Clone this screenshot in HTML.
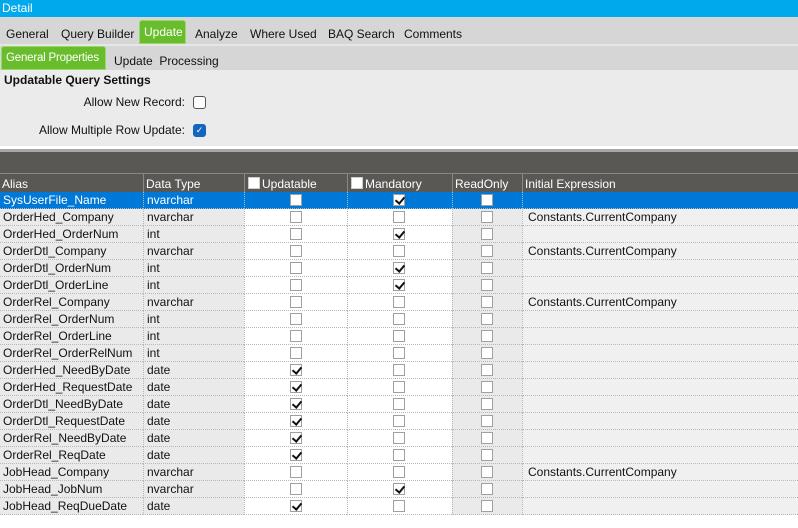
<!DOCTYPE html>
<html><head><meta charset="utf-8"><style>
*{margin:0;padding:0;box-sizing:border-box}
body{width:798px;height:528px;background:#fff;font-family:"Liberation Sans",Arial,sans-serif;font-size:12px;color:#111;position:relative;overflow:hidden}
.a{position:absolute}
.title{left:0;top:0;width:798px;height:17px;background:#00a9ec;color:#fff;padding:1px 2px;font-size:12px}
.tabs{left:0;top:17px;width:798px;height:27px;background:#d6d6d6}
.tab{position:absolute;top:10px}
.sub{left:0;top:44px;width:798px;height:26px;background:#d6d6d6;border-top:2px solid #e6e6e6}
.green{background:#69bd2c;color:#fff;border:1px solid #9ad86e;border-radius:3px 3px 0 0}
.panel{left:0;top:70px;width:798px;height:76px;background:#ebebeb}
.cb{position:absolute;width:13px;height:13px;border:1px solid #555;border-radius:3px;background:#fff}
.dark{left:0;top:149px;width:798px;height:43px;background:#5a5855;border-top:3px solid #a8a8a8}
.hdr{position:absolute;top:173px;height:19px;color:#fff;border-left:1px solid #8a8886;padding:3px 2px 0 2px;border-top:1px solid #8a8886}
.row{position:absolute;left:0;width:798px;height:17px}
.c{position:absolute;top:0;height:17px;border-bottom:1px dotted #b8b8b8;border-left:1px dotted #b8b8b8;padding:1px 0 0 3px;white-space:nowrap}
.k{position:absolute;top:2px;width:12px;height:12px;border:1px solid #a0a0a0;background:#fff}
.k.on::after{content:"";position:absolute;left:3px;top:0px;width:4px;height:7px;border-right:2px solid #111;border-bottom:2px solid #111;transform:rotate(40deg)}
.hk{position:absolute;top:3px;width:12px;height:12px;background:#fff;border:1px solid #ccc}
</style></head><body>
<div class="a title">Detail</div>
<div class="a tabs">
<span class="tab" style="left:6px">General</span>
<span class="tab" style="left:61px">Query Builder</span>
<div class="a green" style="left:139px;top:3px;width:47px;height:24px;padding:4px 0 0 4px">Update</div>
<span class="tab" style="left:195px">Analyze</span>
<span class="tab" style="left:250px">Where Used</span>
<span class="tab" style="left:328px">BAQ Search</span>
<span class="tab" style="left:404px">Comments</span>
</div>
<div class="a sub">
<div class="a green" style="left:1px;top:0px;width:105px;height:24px;padding:5px 0 0 4px;white-space:nowrap;font-size:11.5px;letter-spacing:-0.2px">General Properties</div>
<span class="a" style="left:114px;top:8px">Update&nbsp; Processing</span>
</div>
<div class="a panel">
<div class="a" style="left:4px;top:3px;font-weight:bold">Updatable Query Settings</div>
<div class="a" style="right:613px;top:25px">Allow New Record:</div>
<div class="cb" style="left:193px;top:26px"></div>
<div class="a" style="right:613px;top:53px">Allow Multiple Row Update:</div>
<div class="cb" style="left:193px;top:54px;background:#1565c0;border-color:#1565c0;color:#fff;font-size:9px;line-height:11px;text-align:center">✓</div>
</div>
<div class="a dark"></div>
<div class="hdr" style="left:0;width:143px;border-left:none">Alias</div>
<div class="hdr" style="left:143px;width:101px">Data Type</div>
<div class="hdr" style="left:244px;width:103px;padding-left:17px">Updatable<span class="hk" style="left:3px"></span></div>
<div class="hdr" style="left:347px;width:105px;padding-left:17px">Mandatory<span class="hk" style="left:3px"></span></div>
<div class="hdr" style="left:452px;width:70px">ReadOnly</div>
<div class="hdr" style="left:522px;width:276px">Initial Expression</div>
<div id="rows"></div>
<script>
var d=[["SysUserFile_Name","nvarchar",0,1,""],["OrderHed_Company","nvarchar",0,0,"C"],["OrderHed_OrderNum","int",0,1,""],["OrderDtl_Company","nvarchar",0,0,"C"],["OrderDtl_OrderNum","int",0,1,""],["OrderDtl_OrderLine","int",0,1,""],["OrderRel_Company","nvarchar",0,0,"C"],["OrderRel_OrderNum","int",0,0,""],["OrderRel_OrderLine","int",0,0,""],["OrderRel_OrderRelNum","int",0,0,""],["OrderHed_NeedByDate","date",1,0,""],["OrderHed_RequestDate","date",1,0,""],["OrderDtl_NeedByDate","date",1,0,""],["OrderDtl_RequestDate","date",1,0,""],["OrderRel_NeedByDate","date",1,0,""],["OrderRel_ReqDate","date",1,0,""],["JobHead_Company","nvarchar",0,0,"C"],["JobHead_JobNum","nvarchar",0,1,""],["JobHead_ReqDueDate","date",1,0,""]];
var h="";
d.forEach(function(r,i){var s=i==0;var y=192+i*17;
var bg1=s?"#0078d7":"#eaeaea",bg2=s?"#0078d7":"#fff",bg3=s?"#0078d7":"#eaeaea",bg4=s?"#0078d7":"#f0f0f0",col=s?"#fff":"#111";
h+='<div class="row" style="top:'+y+'px;color:'+col+'">'+
'<div class="c" style="left:0;width:143px;border-left:none;background:'+bg1+'">'+r[0]+'</div>'+
'<div class="c" style="left:143px;width:101px;background:'+bg1+'">'+r[1]+'</div>'+
'<div class="c" style="left:244px;width:103px;background:'+bg2+'"><span class="k'+(r[2]?' on':'')+'" style="left:45px"></span></div>'+
'<div class="c" style="left:347px;width:105px;background:'+bg2+'"><span class="k'+(r[3]?' on':'')+'" style="left:45px"></span></div>'+
'<div class="c" style="left:452px;width:70px;background:'+bg3+'"><span class="k" style="left:28px"></span></div>'+
'<div class="c" style="left:522px;width:276px;background:'+bg4+';padding-left:5px">'+(r[4]?"Constants.CurrentCompany":"")+'</div></div>';});
document.getElementById("rows").innerHTML=h;
</script>
</body></html>
